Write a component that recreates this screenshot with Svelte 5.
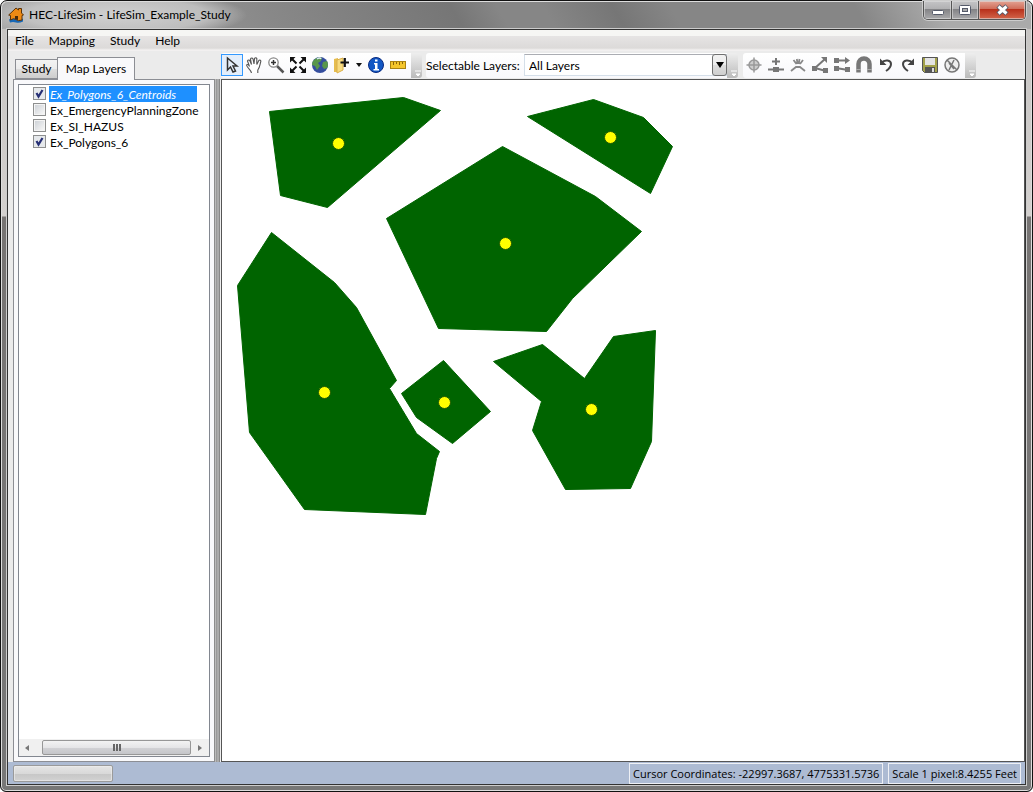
<script>
  let layers = $state([
    { name: 'Ex_Polygons_6_Centroids', on: true },
    { name: 'Ex_EmergencyPlanningZone', on: false },
    { name: 'Ex_SI_HAZUS', on: false },
    { name: 'Ex_Polygons_6', on: true }
  ]);
  let selected = $state(0);

  const polygons = [
    '47,31 181,17 218,30 105,127 58,115',
    '305,36 371,19 421,37 450,66 428,113',
    '280,66 373,116 419,151 350,218 324,251 216,248 164,138',
    '49,152 112,202 134,227 174,300 167,308 194,353 217,371 214,378 203,434 82,429 27,352 15,205',
    '221,280 268,331 230,363 194,337 179,313',
    '271,281 320,264 362,298 391,256 433,250 429,361 408,408 343,409 310,350 319,321'
  ];
  const centroids = [[116, 63], [388, 57], [283, 163], [102, 312], [222, 322], [369, 329]];
</script>

{#snippet grip()}
  <button class="grip" aria-label="Toolbar options">
    <svg width="11" height="24"><path d="M4 17h6M5 20h4l-2 2z" stroke="#fff" fill="#fff" /></svg>
  </button>
{/snippet}

<div class="window">
  <header class="titlebar">
    <svg class="logo" width="16" height="16" viewBox="0 0 16 16">
      <path d="M1 12.500q3-2 7 0t7-1v3q-4 2-7 1t-6 0z" fill="#1767b5" />
      <path d="M.7 8 8 1l2.500 2V1.500h3V6L15.500 8l-1.500.5V13q-4 1.500-6-.5t-5.500.5V8.500z" fill="#ee8a14" stroke="#5a3208" />
      <path d="M7 9h3v4l-3-1z" fill="#4b2a08" />
    </svg>
    <span class="title">HEC-LifeSim - LifeSim_Example_Study</span>
    <div class="caption">
      <button class="min" aria-label="Minimize"><svg width="27" height="18"><rect x="8.500" y="9.500" width="11" height="4" rx="1" fill="#fff" stroke="#555a6a" /></svg></button>
      <button class="max" aria-label="Maximize"><svg width="26" height="18"><rect x="7.500" y="4.500" width="11" height="9" rx="1" fill="#fff" stroke="#555a6a" /><rect x="10.500" y="7.500" width="5" height="3" fill="#aaa" stroke="#555a6a" /></svg></button>
      <button class="close" aria-label="Close"><svg width="46" height="18"><path d="M19 5l9 8M28 5l-9 8" stroke="#555a6a" stroke-width="5" /><path d="M19.500 5.500l8 7M27.500 5.500l-8 7" stroke="#fff" stroke-width="3" /></svg></button>
    </div>
  </header>

  <div class="client">
    <nav class="menu">
      <button>File</button><button>Mapping</button><button>Study</button><button>Help</button>
    </nav>

    <main>
      <aside>
        <div class="tabs" role="tablist">
          <button role="tab" aria-selected="false" class="tab">Study</button>
          <button role="tab" aria-selected="true" class="tab active">Map Layers</button>
        </div>
        <div class="panel">
          <div class="tree">
            <ul>
              {#each layers as layer, i}
                <li>
                  <input type="checkbox" id={'layer' + i} bind:checked={layer.on} />
                  <label for={'layer' + i} class:selected={selected === i}>{layer.name}</label>
                </li>
              {/each}
            </ul>
            <div class="scroll">
              <button aria-label="Scroll left"><svg width="4" height="6"><path d="M4 0v6L0 3z" fill="#777" /></svg></button>
              <div class="thumb"><i></i><i></i><i></i></div>
              <button aria-label="Scroll right"><svg width="4" height="6"><path d="M0 0v6l4-3z" fill="#777" /></svg></button>
            </div>
          </div>
        </div>
      </aside>

      <div class="splitter"></div>

      <section class="work">
        <div class="tray">
          <div class="bar">
            <button class="tool on" aria-label="Select"><svg viewBox="0 0 20 20"><path d="M5.500 3v12l3-3 2.500 5 2.500-1-2.500-5h4z" fill="#e3eefb" stroke="#333" stroke-width="1.500" /></svg></button>
            <button class="tool" aria-label="Pan"><svg viewBox="0 0 20 20"><path d="M7.500 18c0-3-4.500-5-5-8 1-1.200 2.500 0 3 1.500L3.500 6c.5-1.300 2-1.200 2.500 0l1.500 3.500L6.500 4c.5-1.300 2-1.300 2.500 0L10 9l.5-5.500c.5-1 2-1 2.300 0V9.500l2-4c1-1 2.200-.2 2 1-1 3-.8 6-3 8.500V18" fill="#fff" stroke="#555" stroke-width="1.100" /></svg></button>
            <button class="tool" aria-label="Zoom in"><svg viewBox="0 0 20 20"><path d="M11 11l6.500 6.500" stroke="#555" stroke-width="2.500" /><circle cx="7.500" cy="7.500" r="4.700" fill="#fff" stroke="#888" stroke-width="1.300" /><path d="M5 7.500h5M7.500 5v5" stroke="#333" stroke-width="1.500" /></svg></button>
            <button class="tool" aria-label="Full extent"><svg viewBox="0 0 20 20"><path d="M4 4l4.500 4.500M16 4l-4.500 4.500M4 16l4.500-4.500M16 16l-4.500-4.500" stroke="#111" stroke-width="2" /><path d="M2 2h5.500L2 7.500zM18 2v5.500L12.500 2zM2 18v-5.500L7.500 18zM18 18h-5.500l5.500-5.500z" fill="#111" /></svg></button>
            <button class="tool" aria-label="Globe"><svg viewBox="0 0 20 20"><circle cx="10" cy="10" r="8" fill="#354e9e" /><path d="M5 4q4-3 7-1l-1 3-3 2 2 3-3 4-2-4-3-1q0-4 3-6zM13 7l4-1q2 4 0 7l-3 1-2-3z" fill="#58964b" /><path d="M7 4q3-2 4 0" stroke="#dce8f5" stroke-width="1.500" fill="none" /></svg></button>
            <button class="tool" aria-label="Add layer"><svg viewBox="0 0 20 20"><path d="M2 4l4-1v14H2z" fill="#e6bd4f" /><path d="M5 5l6-2v12l-6 3z" fill="#f7db80" stroke="#dbb04a" /><path d="M8.500 7.500H17M12.800 3v9" stroke="#111" stroke-width="2.200" /></svg></button>
            <button class="tool narrow" aria-label="Add layer options"><svg viewBox="0 0 12 20"><path d="M3 8h6l-3 4z" fill="#111" /></svg></button>
            <button class="tool" aria-label="Identify"><svg viewBox="0 0 20 20"><circle cx="10" cy="10" r="7.500" fill="#1257c4" stroke="#092a80" /><path d="M8 8h3.500v6H13v1.500H7.500V14H9V9.500H8zM9 4.500h2.500v2H9z" fill="#fff" /></svg></button>
            <button class="tool" aria-label="Measure"><svg viewBox="0 0 20 20"><rect x="2.500" y="6.500" width="15" height="7" fill="#f4c52b" stroke="#a98212" /><path d="M5.500 7v3M8.500 7v2M11.500 7v3M14.500 7v2" stroke="#8b6508" /></svg></button>
          </div>
          {@render grip()}
          <div class="bar second">
            <label for="selectable">Selectable Layers:</label>
            <div class="combo">
              <select id="selectable"><option>All Layers</option></select>
              <span class="drop"><svg width="8" height="6"><path d="M0 0h8L4 6z" fill="#000" /></svg></span>
            </div>
          </div>
          {@render grip()}
          <div class="bar third">
            <button class="tool" aria-label="Add point"><svg viewBox="0 0 20 20"><circle cx="10" cy="10" r="5" fill="#ccc" stroke="#999" stroke-width="1.500" /><path d="M10 2.500v15M2.500 10h15" stroke="#999" stroke-width="1.500" /></svg></button>
            <button class="tool" aria-label="Insert vertex"><svg viewBox="0 0 20 20"><path d="M10 3v7M6 6.500h8M2 14.500h16" stroke="#777" stroke-width="2" /><path d="M7 12h6v5H7z" fill="#777" /></svg></button>
            <button class="tool" aria-label="Explode"><svg viewBox="0 0 20 20"><path d="M5.500 5l3 4M8.800 4l.8 5M11.500 4l-.8 5M15 5l-3 4M3 16l5-4h4l5 4" stroke="#888" stroke-width="1.800" fill="none" /></svg></button>
            <button class="tool" aria-label="Move vertex"><svg viewBox="0 0 20 20"><path d="M15 4 5 13l11 3" stroke="#777" stroke-width="2" fill="none" /><path d="M11 2h6v6zM2 11h5v5H2zM13 13h5v5h-5z" fill="#777" /></svg></button>
            <button class="tool" aria-label="Move feature"><svg viewBox="0 0 20 20"><path d="M3 5.500h12M4 13l12 2" stroke="#777" stroke-width="2" /><path d="M2 3h5v5H2zM13 2l5 3.500L13 9zM2 11h5v5H2zM13 12h5v5h-5z" fill="#777" /></svg></button>
            <button class="tool" aria-label="Snap"><svg viewBox="0 0 20 20"><path d="M4.500 17.500V9a5.500 5.500 0 0 1 11 0v8.500" fill="none" stroke="#777" stroke-width="4.500" /><path d="M2 14.500h5M13 14.500h5" stroke="#aaa" /></svg></button>
            <button class="tool" aria-label="Undo"><svg viewBox="0 0 20 20"><path d="M5 8c4-4 10-3 10 1 0 3-2 5-5 7" fill="none" stroke="#444" stroke-width="2" /><path d="M4 3.500V10h6.500z" fill="#444" /></svg></button>
            <button class="tool" aria-label="Redo"><svg viewBox="0 0 20 20"><path d="M15 8C11 4 5 5 5 9c0 3 2 5 5 7" fill="none" stroke="#444" stroke-width="2" /><path d="M16 3.500V10H9.500z" fill="#444" /></svg></button>
            <button class="tool" aria-label="Save"><svg viewBox="0 0 20 20"><path d="M2.500 2.500h15v15h-13l-2-2z" fill="#a3a24b" stroke="#555" /><path d="M5 3h10v7H5z" fill="#e4e4e4" /><path d="M5 12h10v5H5z" fill="#555" /><path d="M12 13h2v4h-2z" fill="#ddd" /></svg></button>
            <button class="tool" aria-label="Discard edits"><svg viewBox="0 0 20 20"><circle cx="10" cy="10" r="7" fill="#eee" stroke="#777" stroke-width="1.500" /><path d="M5 5l10 10M12 5l-5 10M7 8l5 6" stroke="#777" stroke-width="1.500" /></svg></button>
          </div>
          {@render grip()}
        </div>
        <div class="map">
          <svg width="100%" height="100%">
            {#each polygons as points}<polygon {points} fill="#006400" stroke="#006400" transform="translate(0.5 0.5)" />{/each}
            {#each centroids as [cx, cy]}<circle cx={cx + 0.5} cy={cy + 0.5} r="6" fill="#ff0" stroke="#1d5a00" stroke-width="1" />{/each}
          </svg>
        </div>
      </section>
    </main>

    <footer>
      <div class="progress"></div>
      <span class="status">Cursor Coordinates: -22997.3687, 4775331.5736</span>
      <span class="status">Scale 1 pixel:8.4255 Feet</span>
    </footer>
  </div>
</div>

<style>
  :global(body) { margin: 0; background: #fff; }
  * { box-sizing: border-box; }
  button { font: inherit; color: inherit; border: 0; padding: 0; margin: 0; background: none; }
  svg { display: block; }
  .window {
    height: 100vh; display: flex; flex-direction: column; padding: 1px 6px 6px;
    font: 12px/16px "Segoe UI", Lato, sans-serif; color: #000;
    border: 1px solid #111; border-radius: 7px 7px 6px 6px;
    background: linear-gradient(#c5c3c1 0, #d3d0ce 215px, #777473 216px, #777 100%);
    box-shadow: inset 0 0 0 1px #ddd;
  }
  .titlebar {
    display: flex; align-items: flex-start; height: 27px; flex: none; margin: 0 -5px; padding-left: 6px;
    background:
      radial-gradient(ellipse 130px 24px at 115px 13px, #d0d0d0 0, #c8c8c8cc 70%, #ccc0 100%),
      linear-gradient(60deg, #aaa 0, #888 240px, #767676 400px, #868686 440px, #868686 480px, #767676 540px, #868686 590px, #868686 750px, #aaa 820px);
    border-radius: 6px 6px 0 0;
  }
  .logo { margin-top: 5px; }
  .title { margin: 5px 0 0 5px; }
  .caption {
    display: flex; margin: -1px 5px 0 auto; border: 1px solid #555; border-top: 0; border-radius: 0 0 5px 5px;
    overflow: hidden; box-shadow: 0 0 0 1px #ccc;
  }
  .caption button { height: 18px; background: linear-gradient(#c4c4c6 0, #b0b0b2 45%, #838386 46%, #aaaaac 100%); border-right: 1px solid #555; box-shadow: inset 0 0 0 1px #ddd9; }
  .caption .close { border: 0; background: linear-gradient(#e3a394 0, #cf6b57 45%, #b8301a 46%, #d3654a 100%); }
  .client { flex: 1; min-height: 0; display: flex; flex-direction: column; border: 1px solid #333; outline: 1px solid #ccc; background: #ebebeb; }
  .menu {
    display: flex; flex: none; height: 21px; padding-left: 7px; gap: 15px;
    background: linear-gradient(#f6f6f4 0 6px, #e6e4e4 6px, #dcdad9 18px, #f2f0f0 20px);
  }
  main { flex: 1; min-height: 0; display: flex; }
  aside { width: 206px; flex: none; padding-left: 5px; display: flex; flex-direction: column; }
  .tabs { display: flex; align-items: flex-end; height: 29px; flex: none; padding-left: 2px; z-index: 1; }
  .tab { height: 20px; width: 42px; border: 1px solid #8c8e94; border-right: 0; background: linear-gradient(#f3f3f3, #ebebeb 50%, #dddddd 51%, #cdcdcd); margin-bottom: 1px; }
  .tab.active { height: 23px; width: 78px; background: #f9f9fb; border: 1px solid #8c8e94; border-bottom: 0; margin-bottom: 0; }
  .panel { flex: 1; min-height: 0; margin-top: -1px; padding: 4px; background: #f9f9fb; border: 1px solid #8c8e94; border-right: 0; display: flex; }
  .tree { flex: 1; min-width: 0; display: flex; flex-direction: column; background: #fff; border: 1px solid #828790; }
  ul { flex: 1; margin: 0; padding: 1px 0 0 14px; list-style: none; overflow: hidden; }
  li { display: flex; height: 16px; white-space: nowrap; }
  li input {
    appearance: none; width: 13px; height: 13px; margin: 1px 3px 0 0; flex: none; border: 1px solid #8e8f8f;
    background: linear-gradient(135deg, #cfd3d8, #f6f6f6) content-box, #f4f4f4; padding: 1px;
  }
  li input:checked { background: url("data:image/svg+xml,%3Csvg xmlns='http://www.w3.org/2000/svg' width='11' height='11'%3E%3Cpath d='M2.500 5l2 3.500L8.500 2' fill='none' stroke='%23262f75' stroke-width='2.200'/%3E%3C/svg%3E") no-repeat padding-box, #e6e9ec; }
  li label { padding: 1px 1px 0; line-height: 16px; }
  li label.selected { width: 148px; background: #1e90ff; color: #fff; font-style: italic; }
  .scroll { display: flex; height: 17px; flex: none; padding: 1px 0; background: #f0f0f0; }
  .scroll button { width: 23px; flex: none; display: grid; place-items: center; }
  .scroll button:first-child { padding-right: 7px; }
  .scroll button:last-child { width: 18px; }
  .thumb { flex: 1; display: flex; gap: 1px; align-items: center; justify-content: center; border: 1px solid #979797; border-radius: 2px; background: linear-gradient(#f3f3f3, #e5e5e7 50%, #d2d2d5 51%, #c4c5c9); }
  .thumb i { width: 2px; height: 7px; background: #666; }
  .splitter { width: 7px; flex: none; margin-top: 28px; background: linear-gradient(90deg, #8c8c8c 0 1px, #bbb 1px 2px, #999 2px 3px, #aaa 3px 5px, #888 5px 6px, #eee 6px); }
  .work { flex: 1; min-width: 0; display: flex; flex-direction: column; }
  .tray { display: flex; height: 28px; flex: none; padding: 2px 0 1px; }
  .bar { display: flex; align-items: flex-start; padding-top: 1px; flex: none; background: linear-gradient(#fff, #f8f8fb); border-radius: 3px 0 0 3px; }
  .bar:first-child { width: 190px; }
  .second { width: 301px; margin-left: 4px; }
  .second label { width: 98px; line-height: 23px; white-space: nowrap; }
  .third { width: 222px; margin-left: 5px; }
  .tool { width: 22px; height: 22px; flex: none; padding: 1px; }
  .tool svg { width: 20px; height: 20px; }
  .tool.on { border: 1px solid #3399ff; background: #e3eefb; padding: 0; }
  .tool.narrow { width: 12px; padding: 1px 0; }
  .tool.narrow svg { width: 12px; }
  .grip { width: 11px; height: 25px; flex: none; background: linear-gradient(#eee, #bbb); border-radius: 0 3px 3px 0; }
  .combo { position: relative; flex: 1; height: 22px; }
  select { appearance: none; width: 100%; height: 22px; padding: 1px 18px 0 4px; border: 1px solid #d5dfe9; border-top-color: #abadb3; border-radius: 0; background: #fff; font: inherit; color: #000; }
  .drop { position: absolute; right: 0; top: 0; width: 15px; height: 22px; display: grid; place-items: center; border: 1px solid #707070; border-radius: 3px; background: linear-gradient(#f2f2f2, #ebebeb 50%, #ddd 51%, #cfcfcf); pointer-events: none; }
  .map { flex: 1; min-height: 0; background: #fff; border: 1px solid #555; overflow: hidden; }
  footer { display: flex; align-items: center; flex: none; height: 22px; padding: 0 4px 0 5px; gap: 5px; background: #adbbd3; }
  .progress { width: 100px; height: 17px; margin-right: auto; border: 1px solid #9a9a9a; border-radius: 2px; background: linear-gradient(#e5e5e5, #d9d9d9 50%, #c6c6c6 51%, #d2d2d2); box-shadow: inset 0 0 0 1px #eee9; }
  .status { height: 21px; padding: 2px 3px; border: 1px solid #eef0f5; white-space: nowrap; font-family: "Segoe UI", "Open Sans", sans-serif; font-size: 11px; }
</style>
